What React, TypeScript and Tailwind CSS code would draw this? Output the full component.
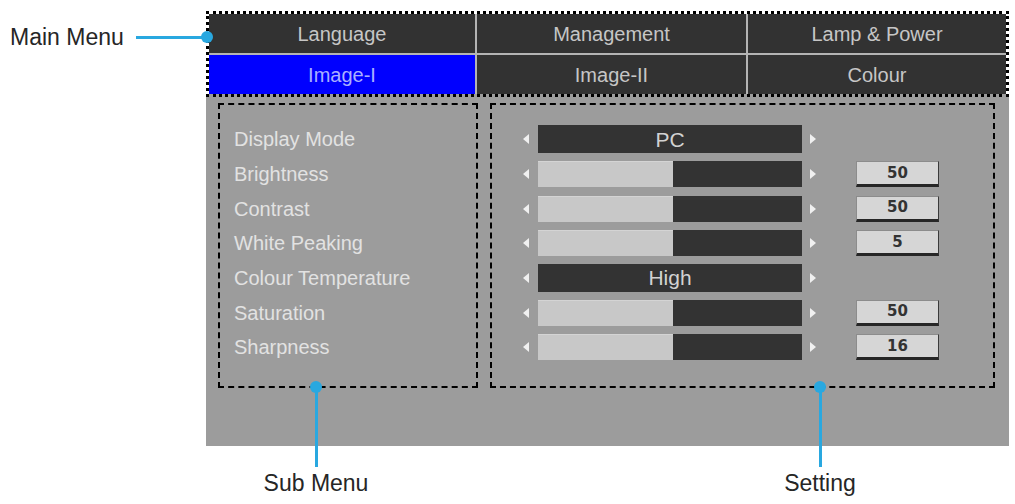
import React from 'react'

type Row = {
  label: string
  kind: 'text' | 'slider'
  text?: string
  value?: number
}

const rows: Row[] = [
  { label: 'Display Mode', kind: 'text', text: 'PC' },
  { label: 'Brightness', kind: 'slider', value: 50 },
  { label: 'Contrast', kind: 'slider', value: 50 },
  { label: 'White Peaking', kind: 'slider', value: 5 },
  { label: 'Colour Temperature', kind: 'text', text: 'High' },
  { label: 'Saturation', kind: 'slider', value: 50 },
  { label: 'Sharpness', kind: 'slider', value: 16 },
]

const tabs = [
  { name: 'Language' },
  { name: 'Management' },
  { name: 'Lamp & Power' },
  { name: 'Image-I', active: true },
  { name: 'Image-II' },
  { name: 'Colour' },
]

function ArrowLeft() {
  return <div className="w-0 h-0 border-y-[5px] border-y-transparent border-r-[6px] border-r-[#f0f0f0]" />
}

function ArrowRight() {
  return <div className="w-0 h-0 border-y-[5px] border-y-transparent border-l-[6px] border-l-[#f0f0f0]" />
}

function SettingRow({ row }: { row: Row }) {
  return (
    <div className="h-[34.67px] flex items-center">
      <ArrowLeft />
      {row.kind === 'text' ? (
        <div className="ml-[9px] w-[264px] h-[28px] bg-[#333333] flex items-center justify-center text-[21px] text-[#d2d2d2]">
          {row.text}
        </div>
      ) : (
        <div className="ml-[9px] w-[264px] h-[26px] flex">
          <div className="w-[135px] bg-[#c8c8c8] border-t border-[#d4d4d4]" />
          <div className="flex-1 bg-[#333333]" />
        </div>
      )}
      <div className="ml-[8px]">
        <ArrowRight />
      </div>
      {row.kind === 'slider' && (
        <div className="ml-[40px] w-[83px] h-[26px] bg-[#d6d6d6] border border-[#8c8c8c] border-r-[#3a3a3a] border-b-[3px] border-b-[#262626] flex items-center justify-center font-['DejaVu_Sans',sans-serif] font-bold text-[15px] text-[#333333]">
          {row.value}
        </div>
      )}
    </div>
  )
}

// callout marker: dot on the dashed edge, a line down, and the caption
function Callout({ x, label }: { x: number; label: string }) {
  return (
    <div className="absolute top-[381px] w-[140px] flex flex-col items-center" style={{ left: x - 70 }}>
      <div className="w-[12px] h-[12px] rounded-full bg-[#29a8e0]" />
      <div className="w-[3px] h-[80px] -mt-[6px] bg-[#29a8e0]" />
      <span className="mt-[3px] text-[23px] leading-[26px] text-[#262626]">{label}</span>
    </div>
  )
}

export default function App() {
  return (
    <div className="relative w-[1015px] h-[504px] bg-white overflow-hidden font-['Liberation_Sans',Arial,sans-serif]">
      <div className="flex pt-[11px]">
        {/* Main Menu caption */}
        <div className="relative w-[206px] h-[52px] flex items-center pl-[10px]">
          <span className="text-[23px] leading-[26px] text-[#262626]">Main Menu</span>
          <div className="ml-[12px] flex-1 h-[3px] bg-[#29a8e0]" />
          <div className="absolute right-[-7px] top-1/2 -translate-y-1/2 w-[12px] h-[12px] rounded-full bg-[#29a8e0] z-10" />
        </div>

        {/* OSD */}
        <div className="w-[803px]">
          <div className="border-[3px] border-dotted border-black bg-[linear-gradient(to_top,#9c9c9c_3px,transparent_3px)] bg-origin-border">
            <div className="grid grid-cols-[266px_269px_1fr] grid-rows-[39px_39px] gap-[2px] bg-[#b4b4b4]">
              {tabs.map((t) => (
                <div
                  key={t.name}
                  className={
                    t.active
                      ? 'bg-[#0000ff] text-[#aab0ff] flex items-center justify-center text-[20px]'
                      : 'bg-[#323232] text-[#c6c6c6] flex items-center justify-center text-[20px]'
                  }
                >
                  {t.name}
                </div>
              ))}
            </div>
          </div>

          <div className="h-[349px] bg-[#9c9c9c] pt-[6px] pl-[12px] flex gap-[12px]">
            {/* sub menu */}
            <div className="w-[260px] h-[285px] border-2 border-dashed border-black pt-[17px] pl-[14px]">
              {rows.map((r) => (
                <div key={r.label} className="h-[34.67px] flex items-center text-[20px] text-[#e2e2e2]">
                  {r.label}
                </div>
              ))}
            </div>

            {/* settings */}
            <div className="w-[505px] h-[285px] border-2 border-dashed border-black pt-[17px] pl-[31px]">
              {rows.map((r) => (
                <SettingRow key={r.label} row={r} />
              ))}
            </div>
          </div>
        </div>
      </div>

      <Callout x={316} label="Sub Menu" />
      <Callout x={820} label="Setting" />
    </div>
  )
}
